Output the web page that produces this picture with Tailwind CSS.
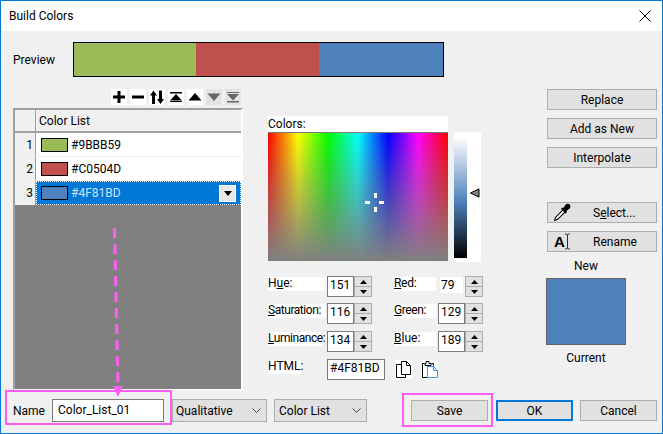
<!DOCTYPE html>
<html>
<head>
<meta charset="utf-8">
<script src="https://cdn.jsdelivr.net/npm/@tailwindcss/browser@4"></script>
</head>
<body class="bg-[#f0f0f0]">
<div class="relative w-[663px] h-[434px] flex flex-col overflow-hidden border-x border-b border-[#0078d7] bg-[#f0f0f0] text-[12px] leading-[16px] text-black font-['Roboto','Noto_Sans',sans-serif]">

    <!-- title bar -->
    <div class="h-[31px] shrink-0 bg-white flex items-center justify-between pl-[8px] pr-[11px] border-t border-[#0078d7]">
        <span>Build Colors</span>
        <svg width="12" height="12" viewBox="0 0 12 12"><path d="M.5.5l11 11M11.5.5l-11 11" stroke="#000" fill="none"/></svg>
    </div>

    <!-- preview -->
    <div class="flex items-center h-[35px] mt-[11px] pl-[12px] shrink-0">
        <span class="w-[60px]">Preview</span>
        <div class="flex w-[371px] h-[35px] border border-black">
            <div class="w-[122px] bg-[#9bbb59]"></div>
            <div class="w-[123px] bg-[#c0504d]"></div>
            <div class="flex-1 bg-[#4f81bd]"></div>
        </div>
    </div>

    <div class="flex mt-[12px] pl-[12px] pr-[5px] h-[301px] shrink-0">
        <!-- left: toolbar and list -->
        <div class="w-[230px] flex flex-col">
            <div class="flex h-[16px] gap-[3px] pl-[98px]">
                <div class="w-[16px] h-[16px] bg-white"><svg width="16" height="16" viewBox="0 0 16 16"><path d="M6.500 2h3v4.500H14v3H9.500V14h-3V9.500H2v-3h4.500z"/></svg></div>
                <div class="w-[16px] h-[16px] bg-white"><svg width="16" height="16" viewBox="0 0 16 16"><path d="M2 6.500h12v3H2z"/></svg></div>
                <div class="w-[16px] h-[16px] bg-white"><svg width="16" height="16" viewBox="0 0 16 16"><path d="M4.500 1.500L8 6.500H6V15H3V6.500H1zM11.500 15L8 10h2V1.500h3V10h2z"/></svg></div>
                <div class="w-[16px] h-[16px] bg-white"><svg width="16" height="16" viewBox="0 0 16 16"><path d="M2 3h12v1.500H2zM8 5l6 6.500H2zM2 12h12v1H2z"/></svg></div>
                <div class="w-[16px] h-[16px] bg-white"><svg width="16" height="16" viewBox="0 0 16 16"><path d="M8 4l6.500 7.500h-13z"/></svg></div>
                <div class="w-[16px] h-[16px] bg-[#e3e3e3]"><svg width="16" height="16" viewBox="0 0 16 16"><path d="M1.500 4.500h13L8 12z" fill="#666"/></svg></div>
                <div class="w-[16px] h-[16px] bg-[#e3e3e3]"><svg width="16" height="16" viewBox="0 0 16 16"><path d="M2 3h12v1H2zM2 5h12l-6 6.500zM2 12h12v1.500H2z" fill="#666"/></svg></div>
            </div>
            <div class="mt-[3px] h-[282px] border-t-2 border-l-2 border-r-2 border-b border-t-[#a0a0a0] border-l-[#a0a0a0] border-r-white border-b-white bg-[#808080] flex flex-col">
                <div class="flex h-[23px] bg-[#f0f0f0] border-b-2 border-[#a0a0a0]">
                    <div class="w-[21px] border-r border-[#a0a0a0]"></div>
                    <div class="pl-[3px] flex items-center">Color List</div>
                </div>
                <div class="flex h-[24px] border-b border-[#f0f0f0]">
                    <div class="w-[21px] bg-[#f0f0f0] border-r border-[#a0a0a0] flex items-center justify-end pr-[2px]">1</div>
                    <div class="flex-1 bg-white flex items-center pl-[5px]">
                        <div class="w-[27px] h-[14px] bg-[#9bbb59] border border-black mr-[3px]"></div>#9BBB59
                    </div>
                </div>
                <div class="flex h-[24px] border-b border-[#f0f0f0]">
                    <div class="w-[21px] bg-[#f0f0f0] border-r border-[#a0a0a0] flex items-center justify-end pr-[2px]">2</div>
                    <div class="flex-1 bg-white flex items-center pl-[5px]">
                        <div class="w-[27px] h-[14px] bg-[#c0504d] border border-black mr-[3px]"></div>#C0504D
                    </div>
                </div>
                <div class="flex h-[24px]">
                    <div class="w-[21px] bg-[#f0f0f0] border-r border-[#a0a0a0] flex items-center justify-end pr-[2px]">3</div>
                    <div class="flex-1 bg-[#0078d7] border border-dotted border-white flex items-center pl-[4px] text-[#cfe4f7]">
                        <div class="w-[27px] h-[14px] bg-[#4f81bd] border border-black mr-[3px]"></div>#4F81BD
                        <div class="ml-auto mr-[4px] w-[17px] h-[17px] bg-[#e8e8e8] border border-white flex items-center justify-center">
                            <svg width="8" height="5" viewBox="0 0 8 5"><path d="M0 0h8L4 5z"/></svg>
                        </div>
                    </div>
                </div>
            </div>
        </div>

        <!-- middle: colour picker -->
        <div class="ml-[25px] w-[215px] pt-[27px]">
            <div class="flex">
                <div class="w-[180px]">
                    <div class="h-[16px] bg-white flex items-center pb-[1px]">Colors:</div>
                    <div class="relative h-[129px] border-t border-[#7a7a7a] bg-[linear-gradient(to_bottom,#80808000,#808080),linear-gradient(to_right,#f00,#ff0,#0f0,#0ff,#00f,#f0f,#f00)]">
                        <svg class="absolute left-[97px] top-[60px]" width="20" height="20" viewBox="0 0 20 20"><path d="M9 0h3v5H9zM9 14h3v5H9zM0 8h5v3H0zM14 8h5v3h-5z" fill="#fff"/></svg>
                    </div>
                </div>
                <div class="ml-[6px] mt-[16px] w-[27px] h-[130px] bg-white">
                    <div class="relative w-[13px] h-[126px] bg-[linear-gradient(to_bottom,#fff,#fff_4%,#4f81bd_55%,#000)]">
                        <svg class="absolute left-[16px] top-[56px]" width="10" height="10" viewBox="0 0 10 10"><path d="M.5 5L9 .8v8.400z" fill="#808080" stroke="#000"/></svg>
                    </div>
                </div>
            </div>

            <div class="flex h-[21px] mt-[14px]">
                <div class="w-[59px]"><span class="block w-[57px] h-[14px] leading-[13px] mt-[1px] bg-white">H<u>u</u>e:</span></div>
                <div class="w-[27px] h-[21px] bg-white border border-[#7a7a7a] flex items-center pl-[2px] pb-[3px]">151</div>
                <div class="w-[18px] h-[21px] flex flex-col border border-[#adadad] bg-[#e1e1e1]">
                    <div class="flex-1 flex items-center justify-center border-b border-[#adadad]"><svg width="7" height="4" viewBox="0 0 7 4"><path d="M3.500 0L7 4H0z"/></svg></div>
                    <div class="flex-1 flex items-center justify-center"><svg width="7" height="4" viewBox="0 0 7 4"><path d="M0 0h7L3.500 4z"/></svg></div>
                </div>
                <div class="ml-[22px] w-[44px]"><span class="block w-[42px] h-[14px] leading-[13px] mt-[1px] bg-white tracking-[-0.3px]"><u>R</u>ed:</span></div>
                <div class="w-[27px] h-[21px] flex items-center pl-[2px] pb-[3px]"><span class="bg-white pl-[1px] pr-[8px]">79</span></div>
                <div class="w-[18px] h-[21px] flex flex-col border border-[#adadad] bg-[#e1e1e1]">
                    <div class="flex-1 flex items-center justify-center border-b border-[#adadad]"><svg width="7" height="4" viewBox="0 0 7 4"><path d="M3.500 0L7 4H0z"/></svg></div>
                    <div class="flex-1 flex items-center justify-center"><svg width="7" height="4" viewBox="0 0 7 4"><path d="M0 0h7L3.500 4z"/></svg></div>
                </div>
            </div>
            <div class="flex h-[21px] mt-[6px]">
                <div class="w-[59px]"><span class="block w-[57px] h-[14px] leading-[13px] mt-[1px] bg-white tracking-[-0.45px]"><u>S</u>aturation:</span></div>
                <div class="w-[27px] h-[21px] bg-white border border-[#7a7a7a] flex items-center pl-[2px] pb-[3px]">116</div>
                <div class="w-[18px] h-[21px] flex flex-col border border-[#adadad] bg-[#e1e1e1]">
                    <div class="flex-1 flex items-center justify-center border-b border-[#adadad]"><svg width="7" height="4" viewBox="0 0 7 4"><path d="M3.500 0L7 4H0z"/></svg></div>
                    <div class="flex-1 flex items-center justify-center"><svg width="7" height="4" viewBox="0 0 7 4"><path d="M0 0h7L3.500 4z"/></svg></div>
                </div>
                <div class="ml-[22px] w-[44px]"><span class="block w-[42px] h-[14px] leading-[13px] mt-[1px] bg-white tracking-[-0.4px]"><u>G</u>reen:</span></div>
                <div class="w-[27px] h-[21px] bg-white border border-[#7a7a7a] flex items-center pl-[2px] pb-[3px]">129</div>
                <div class="w-[18px] h-[21px] flex flex-col border border-[#adadad] bg-[#e1e1e1]">
                    <div class="flex-1 flex items-center justify-center border-b border-[#adadad]"><svg width="7" height="4" viewBox="0 0 7 4"><path d="M3.500 0L7 4H0z"/></svg></div>
                    <div class="flex-1 flex items-center justify-center"><svg width="7" height="4" viewBox="0 0 7 4"><path d="M0 0h7L3.500 4z"/></svg></div>
                </div>
            </div>
            <div class="flex h-[21px] mt-[7px]">
                <div class="w-[59px]"><span class="block w-[54px] h-[14px] leading-[13px] mt-[1px] bg-white tracking-[-0.45px] whitespace-nowrap"><u>L</u>uminance:</span></div>
                <div class="w-[27px] h-[21px] bg-white border border-[#7a7a7a] flex items-center pl-[2px] pb-[3px]">134</div>
                <div class="w-[18px] h-[21px] flex flex-col border border-[#adadad] bg-[#e1e1e1]">
                    <div class="flex-1 flex items-center justify-center border-b border-[#adadad]"><svg width="7" height="4" viewBox="0 0 7 4"><path d="M3.500 0L7 4H0z"/></svg></div>
                    <div class="flex-1 flex items-center justify-center"><svg width="7" height="4" viewBox="0 0 7 4"><path d="M0 0h7L3.500 4z"/></svg></div>
                </div>
                <div class="ml-[22px] w-[44px]"><span class="block w-[42px] h-[14px] leading-[13px] mt-[1px] bg-white"><u>B</u>lue:</span></div>
                <div class="w-[27px] h-[21px] bg-white border border-[#7a7a7a] flex items-center pl-[2px] pb-[3px]">189</div>
                <div class="w-[18px] h-[21px] flex flex-col border border-[#adadad] bg-[#e1e1e1]">
                    <div class="flex-1 flex items-center justify-center border-b border-[#adadad]"><svg width="7" height="4" viewBox="0 0 7 4"><path d="M3.500 0L7 4H0z"/></svg></div>
                    <div class="flex-1 flex items-center justify-center"><svg width="7" height="4" viewBox="0 0 7 4"><path d="M0 0h7L3.500 4z"/></svg></div>
                </div>
            </div>
            <div class="flex h-[21px] mt-[7px]">
                <div class="w-[59px]"><span class="block w-[33px] h-[14px] leading-[13px] mt-[1px] bg-white">HTML:</span></div>
                <div class="w-[58px] h-[21px] bg-white border border-[#7a7a7a] flex items-center pl-[2px] pb-[3px]">#4F81BD</div>
                <div class="ml-[10px] mt-[1px] w-[17px] h-[19px] bg-white">
                    <svg width="17" height="19" viewBox="0 0 17 19"><path d="M6.500 4.500H1.500v13h9v-3" fill="none" stroke="#000"/><path d="M6.500 1.500h5l4 4v9h-9zM11.500 1.500v4h4" fill="#fff" stroke="#000"/></svg>
                </div>
                <div class="ml-[9px] mt-[1px] w-[17px] h-[19px] bg-white">
                    <svg width="17" height="19" viewBox="0 0 17 19"><path d="M3.500 3.500h-2v14H6M4 3.500h1V1.500h3v2h2v2H4zM10.500 3.500h2v2" fill="none" stroke="#000"/><path d="M6.500 6.500h6l4 4v7h-10zM12.500 6.500v4h4" fill="#fff" stroke="#3a96f5"/></svg>
                </div>
            </div>
        </div>

        <!-- right: actions -->
        <div class="ml-auto w-[111px] flex flex-col items-end">
            <div class="w-[110px] h-[21px] shrink-0 flex items-center justify-center bg-[#e1e1e1] border border-[#adadad]">Replace</div>
            <div class="w-[110px] h-[21px] shrink-0 mt-[8px] flex items-center justify-center bg-[#e1e1e1] border border-[#adadad]">Add as New</div>
            <div class="w-[110px] h-[21px] shrink-0 mt-[8px] flex items-center justify-center bg-[#e1e1e1] border border-[#adadad]">Interpolate</div>
            <div class="w-[110px] h-[21px] shrink-0 mt-[34px] flex items-center bg-[#e1e1e1] border border-[#adadad] pl-[5px]">
                <svg class="shrink-0" width="19" height="19" viewBox="0 0 18 18"><path d="M1.500 16.500l1-3 7-7 2 2-7 7z" fill="#fff" stroke="#000"/><path d="M8.500 4.500l1.500 0 2-3c1-1 3-.8 3.800 0 .8.800 1 2.800 0 3.800l-2.800 2 0 1.700-1 1-4.500-4.500z"/></svg>
                <span class="ml-[21px]">S<u>e</u>lect...</span>
            </div>
            <div class="w-[110px] h-[21px] shrink-0 mt-[8px] flex items-center bg-[#e1e1e1] border border-[#adadad] pl-[6px]">
                <span class="shrink-0 text-[15px] font-bold w-[11px] font-['Liberation_Sans',sans-serif]">A</span>
                <svg class="shrink-0 -ml-[1px]" width="7" height="19" viewBox="0 0 7 18"><path d="M1 1.500h1.500l1 1 1-1H6M3.500 2.500v13M1 16.500h1.500l1-1 1 1H6" fill="none" stroke="#000" stroke-width=".8"/></svg>
                <span class="ml-[22px]">Rename</span>
            </div>
            <div class="w-[111px] flex flex-col">
                <div class="w-[80px] mt-[6px] h-[16px] text-center">New</div>
                <div class="w-[80px] h-[67px] mt-[4px] bg-[#4f81bd] border border-[#646464]"></div>
                <div class="w-[80px] mt-[5px] h-[16px] text-center">Current</div>
            </div>
        </div>
    </div>

    <!-- bottom row -->
    <div class="flex items-center h-[23px] mt-[9px] pl-[12px] pr-[5px] shrink-0">
        <span class="w-[39px]">Name</span>
        <div class="w-[112px] h-[23px] bg-white border border-[#7a7a7a] flex items-center pl-[5px] pb-[1px]">Color_List_01</div>
        <div class="ml-[8px] w-[95px] h-[23px] bg-[#e1e1e1] border border-[#adadad] flex items-center justify-between pl-[3px] pr-[5px]">Qualitative
            <svg width="9" height="5" viewBox="0 0 9 5"><path d="M.5.500l4 4 4-4" fill="none" stroke="#444"/></svg>
        </div>
        <div class="ml-[7px] w-[93px] h-[23px] bg-[#e1e1e1] border border-[#adadad] flex items-center justify-between pl-[4px] pr-[5px]">Color List
            <svg width="9" height="5" viewBox="0 0 9 5"><path d="M.5.500l4 4 4-4" fill="none" stroke="#444"/></svg>
        </div>
        <div class="ml-auto w-[77px] h-[21px] flex items-center justify-center bg-[#e1e1e1] border border-[#adadad]">Save</div>
        <div class="ml-[8px] w-[77px] h-[21px] flex items-center justify-center bg-[#e1e1e1] border-2 border-[#0078d7]">OK</div>
        <div class="ml-[7px] w-[77px] h-[21px] flex items-center justify-center bg-[#e1e1e1] border border-[#adadad]">Cancel</div>
    </div>

    <!-- pink annotations over the dialog -->
    <div class="absolute left-[4px] top-[390px] w-[167px] h-[35px] border-2 border-[#ff5cf4]"></div>
    <div class="absolute left-[401px] top-[393px] w-[91px] h-[34px] border-2 border-[#ff5cf4]"></div>
    <svg class="absolute left-[100px] top-[220px]" width="30" height="180" viewBox="0 0 30 180"><path d="M13.500 8L17 165" stroke="#ff5cf4" stroke-width="3" stroke-dasharray="10 6" fill="none"/><path d="M12 166h10l-5 11z" fill="#ff5cf4"/></svg>
</div>
</body>
</html>
